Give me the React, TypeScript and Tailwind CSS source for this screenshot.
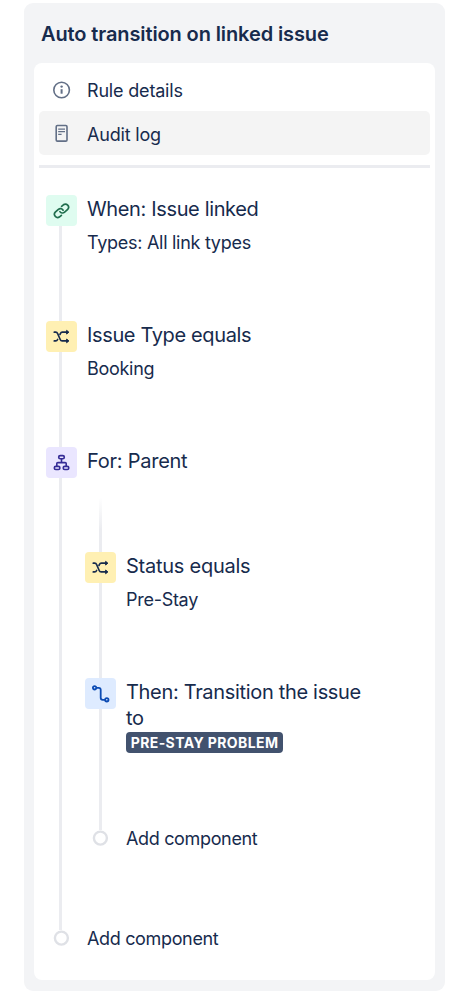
import type { ReactNode } from 'react';
import clsx from 'clsx';

interface StepProps {
  icon: ReactNode;
  color: string;
  title: string;
  titleClass?: string;
  railClass?: string;
  className?: string;
  children?: ReactNode;
}

const LinkIcon = () => (
  <svg width="17" height="17" viewBox="0 0 17 17" fill="none" stroke="#216e4e" strokeWidth="1.7" strokeLinecap="round">
    <path d="M6.9 9.6a3.1 3.1 0 0 0 4.7.6l3.1-2.7a3.2 3.2 0 0 0-4.3-4.7L8.6 4.3" />
    <path d="M10.1 8.2a3.1 3.1 0 0 0-4.7-.8L2.3 10.1a3.2 3.2 0 0 0 4.3 4.7l1.8-1.5" />
  </svg>
);

const ShuffleIcon = () => (
  <svg width="17" height="15" viewBox="0 0 17 15" fill="none" stroke="#172b4d" strokeWidth="1.7" strokeLinecap="round" strokeLinejoin="round">
    <path d="M1.3 3.2h1.4c1 0 1.5.4 1.9 1.3l2.6 6c.4 1 1 1.4 2 1.4h5.2" />
    <path d="M1.3 11.9h1.4c1 0 1.5-.5 1.9-1.4M7 5.4l.4-.9c.4-.9.9-1.3 1.9-1.3h5.1" />
    <path d="M13.9 1.6l2 1.6-2 1.6zM13.9 10.3l2 1.6-2 1.6z" fill="#172b4d" strokeWidth="1" />
  </svg>
);

const BranchIcon = () => (
  <svg width="17" height="17" viewBox="0 0 17 17" fill="none" stroke="#352c96" strokeWidth="1.6" strokeLinejoin="round">
    <rect x="5.7" y="1.6" width="5.6" height="3.1" rx="1.5" />
    <rect x="1.3" y="12.4" width="5.6" height="3.1" rx="1.5" />
    <rect x="10.2" y="12.4" width="5.6" height="3.1" rx="1.5" />
    <path d="M8.5 4.7v3.9M3.8 12.4V9.6c0-.7.4-1 1.1-1h7.2c.7 0 1.1.3 1.1 1v2.8" />
  </svg>
);

const TransitionIcon = () => (
  <svg width="18" height="18" viewBox="0 0 18 18" fill="none" stroke="#0c4bb3" strokeWidth="1.8">
    <circle cx="2.6" cy="2.8" r="1.7" />
    <circle cx="14.8" cy="14.8" r="1.7" />
    <path d="M4.3 2.8h2.4c1.3 0 2 .7 2 2v8c0 1.3.7 2 2 2h2.4" />
  </svg>
);

const InfoIcon = () => (
  <svg width="18" height="18" viewBox="0 0 18 18" fill="none" stroke="#626f86" strokeWidth="1.6">
    <circle cx="8.6" cy="9" r="7.8" />
    <path d="M8.6 8.2v4.5" strokeWidth="2" />
    <circle cx="8.6" cy="5.6" r="1.2" fill="#626f86" stroke="none" />
  </svg>
);

const LogIcon = () => (
  <svg width="18" height="18" viewBox="0 0 18 18" fill="none" stroke="#626f86" strokeWidth="1.6">
    <rect x="3.2" y="1.5" width="10.8" height="15.6" rx="1.2" />
    <path d="M5.2 5.1h6.8M5.2 7.7h6.8M5.2 10.3h3.4" strokeWidth="1.3" />
  </svg>
);

const Step = ({ icon, color, title, titleClass = 'tracking-[-0.25px]', railClass = 'ml-[13px]', className, children }: StepProps) => (
  <div className={clsx('flex', className)}>
    <div className="flex w-[31px] shrink-0 flex-col">
      <div className={clsx('flex h-[31px] items-center justify-center rounded-[4px]', color)}>{icon}</div>
      <div className={clsx('w-[3px] grow bg-[#ebecf0]', railClass)} />
    </div>
    <div className="min-w-0 grow pt-px">
      <h3 className={clsx('pl-2.5 text-[20px] leading-[26px]', titleClass)}>{title}</h3>
      {children}
    </div>
  </div>
);

const Detail = ({ children }: { children: ReactNode }) => (
  <p className="mt-[9px] pl-2.5 text-[18px] leading-6 tracking-[-0.28px]">{children}</p>
);

const AddComponent = () => (
  <div className="flex h-4 items-center">
    <svg className="ml-[7px]" width="17" height="16" viewBox="0 0 17 16" fill="none">
      <circle cx="8.4" cy="8.1" r="6.5" stroke="#dfe1e6" strokeWidth="2.4" />
    </svg>
    <button className="mt-[2px] ml-[17px] text-[18px] leading-6 tracking-[-0.34px] whitespace-nowrap">Add component</button>
  </div>
);

export default function App() {
  return (
    <div className="h-[999px] bg-white pt-[3px] pl-6 font-['Inter','Liberation_Sans',sans-serif] text-[#172b4d]">
      <div className="flex h-[988px] w-[421px] flex-col rounded-[9px] bg-[#f3f4f6] px-2.5 pb-[11px]">
        <h2 className="h-[60px] pt-[18px] pl-[7px] text-[20px] leading-[26px] font-semibold tracking-[-0.11px]">
          Auto transition on linked issue
        </h2>
        <div className="grow rounded-[8px] bg-white px-[5px] pt-[5px]">
          <nav className="text-[18px] tracking-[-0.18px]">
            <a className="flex h-[43px] items-center gap-4 pl-[14px]">
              <InfoIcon />
              <span className="pt-[2px]">Rule details</span>
            </a>
            <a className="flex h-11 items-center gap-4 rounded-[5px] bg-[#f4f4f4] pl-[14px]">
              <LogIcon />
              <span className="pt-[2px]">Audit log</span>
            </a>
          </nav>
          <hr className="mt-[10px] h-[3px] border-0 bg-[#ebecf0]" />

          <div className="mt-[27px] pl-[7px]">
            <Step icon={<LinkIcon />} color="bg-[#dffcf0]" title="When: Issue linked" titleClass="tracking-[-0.36px]" className="h-[126px]">
              <Detail>Types: All link types</Detail>
            </Step>
            <Step icon={<ShuffleIcon />} color="bg-[#fff0b3]" title="Issue Type equals" titleClass="tracking-[-0.36px]" className="h-[126px]">
              <Detail>Booking</Detail>
            </Step>
            <Step icon={<BranchIcon />} color="bg-[#eae6ff]" title="For: Parent" className="h-[483px]">
              <div className="mt-[23px] pl-2">
                <div className="ml-[14px] h-[55px] w-[3px] bg-linear-to-b from-white to-[#ebecf0] to-60%" />
                <Step icon={<ShuffleIcon />} color="bg-[#fff0b3]" title="Status equals" railClass="ml-[14px]" className="h-[126px]">
                  <Detail>Pre-Stay</Detail>
                </Step>
                <Step
                  icon={<TransitionIcon />}
                  color="bg-[#deebff]"
                  title="Then: Transition the issue to"
                  titleClass="w-[260px] tracking-[-0.32px]"
                  railClass="ml-[14px]"
                  className="h-[152px]"
                >
                  <div className="mt-px ml-2.5 flex h-[21px] w-[157px] items-center justify-center rounded-[4px] bg-[#42526e] text-[14px] font-bold tracking-[0.4px] whitespace-nowrap text-white">
                    PRE-STAY PROBLEM
                  </div>
                </Step>
                <AddComponent />
              </div>
            </Step>
            <AddComponent />
          </div>
        </div>
      </div>
    </div>
  );
}
